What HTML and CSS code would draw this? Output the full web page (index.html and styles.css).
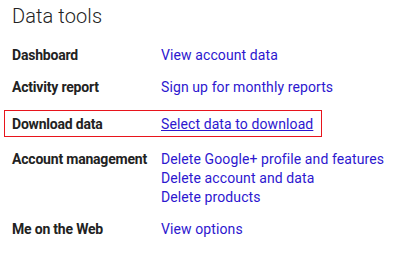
FILE: index.html
```html
<!DOCTYPE html>
<html lang="en">
<head>
    <meta charset="UTF-8">
    <meta name="viewport" content="width=device-width, initial-scale=1.0">
    <title>Data tools</title>
    <link rel="stylesheet" href="styles.css">
</head>
<body>
    <h1 class="title">Data tools</h1>

    <div class="tools">
        <div class="tool-row">
            <div class="tool-label">Dashboard</div>
            <div class="tool-links">
                <a href="#">View account data</a>
            </div>
        </div>
        <div class="tool-row">
            <div class="tool-label">Activity report</div>
            <div class="tool-links">
                <a href="#">Sign up for monthly reports</a>
            </div>
        </div>
        <div class="tool-row highlight">
            <div class="tool-label">Download data</div>
            <div class="tool-links">
                <a href="#" class="active">Select data to download</a>
            </div>
        </div>
        <div class="tool-row">
            <div class="tool-label">Account management</div>
            <div class="tool-links">
                <a href="#">Delete Google+ profile and features</a>
                <a href="#">Delete account and data</a>
                <a href="#">Delete products</a>
            </div>
        </div>
        <div class="tool-row">
            <div class="tool-label">Me on the Web</div>
            <div class="tool-links">
                <a href="#">View options</a>
            </div>
        </div>
    </div>
</body>
</html>
```

FILE: styles.css
```css
:root {
    --text-color: #222222;
    --link-color: #2d17cf;
    --highlight-border: #e8141c;
    --background-color: #ffffff;
}

body {
    font-family: Roboto, "Liberation Sans", Arial, sans-serif;
    margin: 0;
    padding: 4px 12px 0;
    color: var(--text-color);
    font-size: 14px;
    line-height: 19px;
    background-color: var(--background-color);
}

.title {
    font-size: 20px;
    font-weight: 300;
    line-height: 24px;
    letter-spacing: 0.1px;
    margin: 0 0 18px;
}

.tools {
    display: flex;
    flex-direction: column;
    align-items: flex-start;
    gap: 13px;
}

.tool-row {
    display: grid;
    grid-template-columns: 149px auto;
}

.tool-label {
    font-weight: 700;
    letter-spacing: -0.2px;
}

.tool-links {
    display: flex;
    flex-direction: column;
    letter-spacing: 0.1px;
}

.tool-links a {
    color: var(--link-color);
    text-decoration: none;
}

.tool-links a.active {
    text-decoration: underline;
}

.highlight {
    margin-left: -8px;
    padding: 4px 8px 2px 7px;
    border: 1px solid var(--highlight-border);
}
```
